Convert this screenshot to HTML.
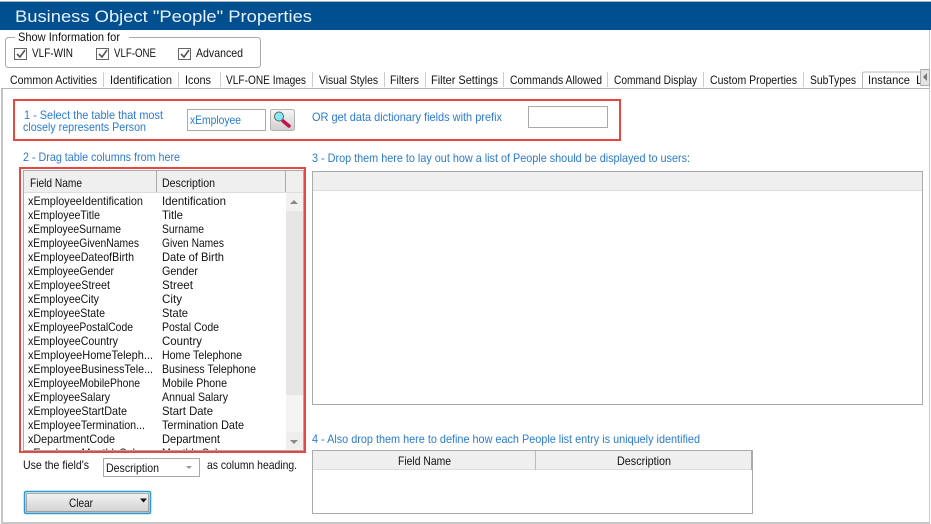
<!DOCTYPE html>
<html><head><meta charset="utf-8"><style>
html,body{margin:0;padding:0;background:#fff}
svg{display:block}
text{font-family:"Liberation Sans",sans-serif;font-size:12px;fill:#111;white-space:pre}
.b{fill:#2a7bd8}
</style></head><body>
<svg width="931" height="524" viewBox="0 0 931 524" xmlns="http://www.w3.org/2000/svg">
<defs>
<linearGradient id="bt" x1="0" y1="0" x2="0" y2="1"><stop offset="0" stop-color="#f6f6f6"/><stop offset="1" stop-color="#cfcfcf"/></linearGradient>
<clipPath id="lc"><rect x="24" y="193" width="262" height="257"/></clipPath>
<clipPath id="tc"><rect x="860" y="60" width="60" height="30"/></clipPath>
</defs>
<rect width="931" height="524" fill="#fff"/>
<rect x="0" y="1" width="931" height="1" fill="#a8b4c0"/>
<rect x="0" y="2" width="931" height="28" fill="#004f91"/>
<text x="15" y="22" style="font-size:17px;fill:#e8f2fa" textLength="297" lengthAdjust="spacingAndGlyphs">Business Object "People" Properties</text>

<rect x="5.5" y="37.5" width="255" height="30" rx="3" fill="none" stroke="#aaa"/>
<rect x="15" y="34" width="114" height="8" fill="#fff"/>
<text x="18" y="41" textLength="102" lengthAdjust="spacingAndGlyphs">Show Information for</text>
<g fill="#fff" stroke="#666"><rect x="14.5" y="48.5" width="12" height="11"/><rect x="96.5" y="48.5" width="12" height="11"/><rect x="178.5" y="48.5" width="12" height="11"/></g>
<g fill="none" stroke="#555" stroke-width="1.6"><path d="M17 54l3 3 5-7"/><path d="M99 54l3 3 5-7"/><path d="M181 54l3 3 5-7"/></g>
<text x="32" y="57" textLength="41" lengthAdjust="spacingAndGlyphs">VLF-WIN</text>
<text x="114" y="57" textLength="42" lengthAdjust="spacingAndGlyphs">VLF-ONE</text>
<text x="196" y="57" textLength="47" lengthAdjust="spacingAndGlyphs">Advanced</text>

<!-- tabs -->
<text x="10" y="84" textLength="87" lengthAdjust="spacingAndGlyphs">Common Activities</text>
<text x="110" y="84" textLength="62" lengthAdjust="spacingAndGlyphs">Identification</text>
<text x="185" y="84" textLength="26" lengthAdjust="spacingAndGlyphs">Icons</text>
<text x="226" y="84" textLength="80" lengthAdjust="spacingAndGlyphs">VLF-ONE Images</text>
<text x="319" y="84" textLength="59" lengthAdjust="spacingAndGlyphs">Visual Styles</text>
<text x="390" y="84" textLength="29" lengthAdjust="spacingAndGlyphs">Filters</text>
<text x="431" y="84" textLength="67" lengthAdjust="spacingAndGlyphs">Filter Settings</text>
<text x="510" y="84" textLength="92" lengthAdjust="spacingAndGlyphs">Commands Allowed</text>
<text x="614" y="84" textLength="83" lengthAdjust="spacingAndGlyphs">Command Display</text>
<text x="710" y="84" textLength="87" lengthAdjust="spacingAndGlyphs">Custom Properties</text>
<text x="810" y="84" textLength="46" lengthAdjust="spacingAndGlyphs">SubTypes</text>
<g fill="#ccc"><rect x="103" y="72" width="1" height="15"/><rect x="178" y="72" width="1" height="15"/><rect x="220" y="72" width="1" height="15"/><rect x="312" y="72" width="1" height="15"/><rect x="384" y="72" width="1" height="15"/><rect x="425" y="72" width="1" height="15"/><rect x="503" y="72" width="1" height="15"/><rect x="607" y="72" width="1" height="15"/><rect x="703" y="72" width="1" height="15"/><rect x="803" y="72" width="1" height="15"/></g>

<!-- panel -->
<rect x="1" y="88" width="2" height="436" fill="#c4c4c4"/>
<rect x="1" y="88" width="929" height="1" fill="#b4b4b4"/>
<rect x="1" y="522" width="929" height="2" fill="#c8c8c8"/>
<rect x="929" y="30" width="1" height="494" fill="#c8c8c8"/>
<path d="M862.5 88V74q0-2 2-2H920" fill="#fff" stroke="#b4b4b4"/>
<text x="868" y="84" textLength="42" lengthAdjust="spacingAndGlyphs">Instance</text>
<text x="916" y="84" clip-path="url(#tc)">L</text>
<rect x="920.5" y="69.5" width="9" height="16" rx="1" fill="#e4e4e4" stroke="#aaa"/>
<path d="M923 77l4-4v8z" fill="#777"/>

<!-- red boxes -->
<rect x="14" y="100" width="606" height="40" fill="none" stroke="#e8473f" stroke-width="2"/>
<rect x="20" y="168" width="285" height="284" fill="none" stroke="#e8473f" stroke-width="2"/>

<text class="b" x="24" y="119" textLength="139" lengthAdjust="spacingAndGlyphs">1 - Select the table that most</text>
<text class="b" x="23" y="131" textLength="123" lengthAdjust="spacingAndGlyphs">closely represents Person</text>
<rect x="187.500" y="109.500" width="78" height="21" fill="#fff" stroke="#aaa"/>
<text x="190" y="124" class="b" textLength="51" lengthAdjust="spacingAndGlyphs">xEmployee</text>
<rect x="270.500" y="109.500" width="24" height="21" rx="2" fill="url(#bt)" stroke="#b4b4b4"/>
<path d="M283 121l6 5" stroke="#c8104e" stroke-width="3.500" stroke-linecap="round"/>
<circle cx="279" cy="116.500" r="4.500" fill="#86e8f0" stroke="#666" stroke-width="1"/>
<text class="b" x="312" y="121" textLength="190" lengthAdjust="spacingAndGlyphs">OR get data dictionary fields with prefix</text>
<rect x="528.500" y="106.500" width="79" height="21" fill="#fff" stroke="#aaa"/>

<text class="b" x="23" y="161" textLength="157" lengthAdjust="spacingAndGlyphs">2 - Drag table columns from here</text>
<text class="b" x="312" y="162" textLength="378" lengthAdjust="spacingAndGlyphs">3 - Drop them here to lay out how a list of People should be displayed to users:</text>

<!-- list -->
<rect x="23.500" y="170.500" width="280" height="280" fill="#fff" stroke="#aaa"/>
<rect x="24" y="171" width="279" height="21" fill="#efefef"/>
<rect x="24" y="192" width="279" height="1" fill="#ddd"/>
<rect x="156" y="171" width="1" height="21" fill="#aaa"/>
<rect x="285" y="171" width="1" height="21" fill="#aaa"/>
<text x="30" y="187" textLength="52" lengthAdjust="spacingAndGlyphs">Field Name</text>
<text x="162" y="187" textLength="53" lengthAdjust="spacingAndGlyphs">Description</text>
<g clip-path="url(#lc)">
<text x="28" y="205" textLength="115" lengthAdjust="spacingAndGlyphs">xEmployeeIdentification</text><text x="162" y="205" textLength="64" lengthAdjust="spacingAndGlyphs">Identification</text>
<text x="28" y="219" textLength="72" lengthAdjust="spacingAndGlyphs">xEmployeeTitle</text><text x="162" y="219" textLength="21" lengthAdjust="spacingAndGlyphs">Title</text>
<text x="28" y="233" textLength="93" lengthAdjust="spacingAndGlyphs">xEmployeeSurname</text><text x="162" y="233" textLength="42" lengthAdjust="spacingAndGlyphs">Surname</text>
<text x="28" y="247" textLength="111" lengthAdjust="spacingAndGlyphs">xEmployeeGivenNames</text><text x="162" y="247" textLength="62" lengthAdjust="spacingAndGlyphs">Given Names</text>
<text x="28" y="261" textLength="106" lengthAdjust="spacingAndGlyphs">xEmployeeDateofBirth</text><text x="162" y="261" textLength="62" lengthAdjust="spacingAndGlyphs">Date of Birth</text>
<text x="28" y="275" textLength="86" lengthAdjust="spacingAndGlyphs">xEmployeeGender</text><text x="162" y="275" textLength="36" lengthAdjust="spacingAndGlyphs">Gender</text>
<text x="28" y="289" textLength="82" lengthAdjust="spacingAndGlyphs">xEmployeeStreet</text><text x="162" y="289" textLength="31" lengthAdjust="spacingAndGlyphs">Street</text>
<text x="28" y="303" textLength="71" lengthAdjust="spacingAndGlyphs">xEmployeeCity</text><text x="162" y="303" textLength="20" lengthAdjust="spacingAndGlyphs">City</text>
<text x="28" y="317" textLength="77" lengthAdjust="spacingAndGlyphs">xEmployeeState</text><text x="162" y="317" textLength="26" lengthAdjust="spacingAndGlyphs">State</text>
<text x="28" y="331" textLength="105" lengthAdjust="spacingAndGlyphs">xEmployeePostalCode</text><text x="162" y="331" textLength="57" lengthAdjust="spacingAndGlyphs">Postal Code</text>
<text x="28" y="345" textLength="90" lengthAdjust="spacingAndGlyphs">xEmployeeCountry</text><text x="162" y="345" textLength="40" lengthAdjust="spacingAndGlyphs">Country</text>
<text x="28" y="359" textLength="125" lengthAdjust="spacingAndGlyphs">xEmployeeHomeTeleph...</text><text x="162" y="359" textLength="80" lengthAdjust="spacingAndGlyphs">Home Telephone</text>
<text x="28" y="373" textLength="125" lengthAdjust="spacingAndGlyphs">xEmployeeBusinessTele...</text><text x="162" y="373" textLength="94" lengthAdjust="spacingAndGlyphs">Business Telephone</text>
<text x="28" y="387" textLength="112" lengthAdjust="spacingAndGlyphs">xEmployeeMobilePhone</text><text x="162" y="387" textLength="65" lengthAdjust="spacingAndGlyphs">Mobile Phone</text>
<text x="28" y="401" textLength="82" lengthAdjust="spacingAndGlyphs">xEmployeeSalary</text><text x="162" y="401" textLength="66" lengthAdjust="spacingAndGlyphs">Annual Salary</text>
<text x="28" y="415" textLength="99" lengthAdjust="spacingAndGlyphs">xEmployeeStartDate</text><text x="162" y="415" textLength="51" lengthAdjust="spacingAndGlyphs">Start Date</text>
<text x="28" y="429" textLength="117" lengthAdjust="spacingAndGlyphs">xEmployeeTermination...</text><text x="162" y="429" textLength="82" lengthAdjust="spacingAndGlyphs">Termination Date</text>
<text x="28" y="443" textLength="87" lengthAdjust="spacingAndGlyphs">xDepartmentCode</text><text x="162" y="443" textLength="58" lengthAdjust="spacingAndGlyphs">Department</text>
<text x="28" y="457" textLength="122" lengthAdjust="spacingAndGlyphs">xEmployeeMonthlySalary</text><text x="162" y="457" textLength="70" lengthAdjust="spacingAndGlyphs">Monthly Salary</text>
</g>
<rect x="286" y="193" width="17" height="257" fill="#f4f4f4"/>
<rect x="286" y="193" width="17" height="18" fill="#f1f1f1"/>
<rect x="286" y="211" width="17" height="184" rx="1" fill="#e6e6e6"/>
<rect x="286" y="432" width="17" height="17" fill="#eee"/>
<path d="M290 204l4-4 4 4z" fill="#888"/>
<path d="M290 440h8l-4 4z" fill="#888"/>

<text x="23" y="469" textLength="66" lengthAdjust="spacingAndGlyphs">Use the field's</text>
<rect x="103.500" y="458.500" width="96" height="18" fill="#fff" stroke="#aaa"/>
<text x="106" y="472" textLength="53" lengthAdjust="spacingAndGlyphs">Description</text>
<path d="M186 466h6l-3 3z" fill="#999"/>
<text x="207" y="469" textLength="90" lengthAdjust="spacingAndGlyphs">as column heading.</text>

<rect x="24.500" y="491.500" width="126" height="22" rx="1.500" fill="url(#bt)" stroke="#2a9ad0" stroke-width="1.500"/>
<rect x="26.500" y="493.500" width="122" height="18" fill="none" stroke="#666" stroke-dasharray="1 1"/>
<text x="69" y="507" textLength="24" lengthAdjust="spacingAndGlyphs">Clear</text>
<path d="M140 498.500h7l-3.500 4z" fill="#111"/>

<!-- box 3 -->
<rect x="312.500" y="171.500" width="610" height="233" fill="#fff" stroke="#aaa"/>
<rect x="313" y="172" width="609" height="18" fill="#efefef"/>
<rect x="313" y="190" width="609" height="1" fill="#ddd"/>

<text class="b" x="312" y="443" textLength="388" lengthAdjust="spacingAndGlyphs">4 - Also drop them here to define how each People list entry is uniquely identified</text>
<rect x="312.500" y="450.500" width="440" height="63" fill="#fff" stroke="#aaa"/>
<rect x="313" y="451" width="439" height="18" fill="#efefef"/>
<rect x="313" y="469" width="439" height="1" fill="#ddd"/>
<rect x="535" y="451" width="1" height="19" fill="#bbb"/>
<rect x="751" y="451" width="1" height="19" fill="#aaa"/>
<text x="398" y="465" textLength="53" lengthAdjust="spacingAndGlyphs">Field Name</text>
<text x="617" y="465" textLength="54" lengthAdjust="spacingAndGlyphs">Description</text>
</svg>
</body></html>
